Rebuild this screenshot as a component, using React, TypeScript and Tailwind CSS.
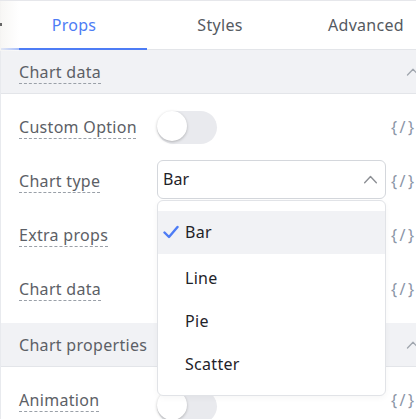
import React from 'react';

const CodeIcon = () => (
  <span className="text-[16px] tracking-[2.5px] text-[#8a94a6] select-none">{'{/}'}</span>
);

const ChevronUp = ({ className = '' }: { className?: string }) => (
  <svg viewBox="0 0 16 16" className={className} fill="none" stroke="currentColor" strokeWidth={1.3}>
    <path d="M2.5 11 L8 5.2 L13.5 11" strokeLinecap="round" strokeLinejoin="round" />
  </svg>
);

const Switch = () => (
  <div className="w-[60px] h-[33px] rounded-full bg-[#e9eaee] relative">
    <div className="absolute left-0 top-0 w-[30px] h-[30px] rounded-full bg-white shadow-[0_1px_3px_rgba(0,0,0,0.25)]" />
  </div>
);

const Label = ({ children }: { children: React.ReactNode }) => (
  <span className="text-[16px] tracking-[0.3px] text-[#5c6066] underline decoration-dashed decoration-[#9aa0a8] underline-offset-[5px] decoration-1">
    {children}
  </span>
);

const SectionHeader = ({ title, dashed }: { title: string; dashed?: boolean }) => (
  <div className="h-[44px] flex items-center justify-between pl-[18px] pr-[19px] bg-[#f1f2f5] border-b border-[#e3e5e9]">
    {dashed ? (
      <Label>{title}</Label>
    ) : (
      <span className="text-[16px] tracking-[0.3px] text-[#5c6066]">{title}</span>
    )}
    <ChevronUp className="w-[16px] h-[16px] text-[#a0a6ae]" />
  </div>
);

const Row = ({ label, children }: { label: string; children?: React.ReactNode }) => (
  <div className="h-[54px] flex items-center pl-[18px]">
    <div className="w-[138px] shrink-0">
      <Label>{label}</Label>
    </div>
    <div className="w-[229px] shrink-0 flex items-center">{children}</div>
    <div className="ml-[5px]">
      <CodeIcon />
    </div>
  </div>
);

const options = ['Line', 'Pie', 'Scatter'];

export default function App() {
  return (
    <div
      className="w-[416px] h-[419px] overflow-hidden bg-white relative border-t border-[#e6e7eb]"
      style={{ fontFamily: '"Noto Sans", "Open Sans", sans-serif' }}
    >
      <div className="w-[440px] border-l border-[#e8eaee] h-full">
        {/* tabs */}
        <div className="relative flex h-[49px] border-b border-[#e3e5e9]">
          <div className="w-[146px] flex items-center justify-center relative text-[16px] tracking-[0.3px] text-[#4d7cf5]">
            Props
            <div className="absolute left-0 right-0 bottom-[-1px] h-[2px] bg-[#4d7cf5]" />
          </div>
          <div className="w-[146px] flex items-center justify-center text-[16px] tracking-[0.3px] text-[#555a61]">
            Styles
          </div>
          <div className="w-[146px] flex items-center justify-center text-[16px] tracking-[0.3px] text-[#555a61]">
            Advanced
          </div>
          <div className="absolute left-[-1px] top-0 w-[19px] h-[50px] bg-gradient-to-r from-[#f6f5f3]/90 to-white/50" />
          <div className="absolute left-[-1px] top-[22px] w-[2px] h-[3px] bg-[#666]" />
        </div>

        <SectionHeader title="Chart data" dashed />

        <div className="pt-[6px] pb-[7px]">
          <Row label="Custom Option">
            <Switch />
          </Row>
          <Row label="Chart type">
            <div className="relative w-full top-[-2px]">
              <div className="h-[39px] w-full rounded-[6px] border border-[#d4d7dc] flex items-center justify-between pl-[5px] pr-[6px]">
                <span className="text-[16px] text-[#1f2329]">Bar</span>
                <ChevronUp className="w-[17px] h-[17px] text-[#8c8f94]" />
              </div>
              {/* open dropdown */}
              <div className="absolute z-10 left-0 top-[40px] w-full h-[196px] rounded-[6px] border border-[#e1e3e7] bg-white shadow-[0_2px_6px_rgba(0,0,0,0.04)] pt-[10px]">
                <div className="h-[43px] mb-[3px] flex items-center pl-[5px] bg-[#f1f2f5] text-[16px] tracking-[0.3px] text-[#1f2329]">
                  <span className="w-[22px] flex items-center">
                    <svg viewBox="0 0 16 16" className="w-[16px] h-[16px]" fill="none" stroke="#4d7cf5" strokeWidth={2.4}>
                      <path d="M1.5 8.5 L6 13 L14.5 3" strokeLinecap="round" strokeLinejoin="round" />
                    </svg>
                  </span>
                  Bar
                </div>
                {options.map((o) => (
                  <div key={o} className="h-[43px] flex items-center pl-[27px] text-[16px] tracking-[0.3px] text-[#1f2329]">
                    {o}
                  </div>
                ))}
              </div>
            </div>
          </Row>
          <Row label="Extra props" />
          <Row label="Chart data" />
        </div>

        <SectionHeader title="Chart properties" />

        <div className="pt-[6px]">
          <Row label="Animation">
            <div className="mt-[13px]">
              <Switch />
            </div>
          </Row>
        </div>
      </div>
    </div>
  );
}
